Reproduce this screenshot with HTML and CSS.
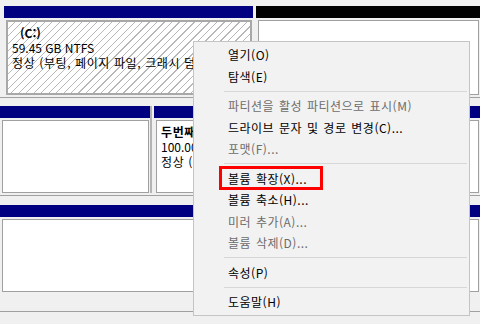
FILE: index.html
```html
<!DOCTYPE html>
<html lang="ko">

<head>
    <meta charset="UTF-8">
    <title>디스크 관리</title>
    <link rel="stylesheet" href="styles.css">
</head>

<body>
    <div class="view">
        <div class="disk first">
            <div class="parts">
                <div class="part sys">
                    <div class="bar"></div>
                    <div class="box hatched">
                        <div class="name">(C:)</div>
                        <div>59.45 GB NTFS</div>
                        <div class="ko">정상 (부팅, 페이지 파일, 크래시 덤프, 주 파티션)</div>
                    </div>
                </div>
                <div class="part free">
                    <div class="bar black"></div>
                    <div class="box"></div>
                </div>
            </div>
        </div>

        <div class="disk">
            <div class="parts split">
                <div class="part small">
                    <div class="bar"></div>
                    <div class="box"></div>
                </div>
                <div class="part free">
                    <div class="bar"></div>
                    <div class="box vol">
                        <div class="name ko">두번째 볼륨 (D:)</div>
                        <div>100.00 GB NTFS</div>
                        <div class="ko">정상 (주 파티션)</div>
                    </div>
                </div>
            </div>
        </div>

        <div class="disk last">
            <div class="parts">
                <div class="part free">
                    <div class="bar"></div>
                    <div class="box"></div>
                </div>
            </div>
        </div>
    </div>

    <div class="menu">
        <div class="item">열기(O)</div>
        <div class="item">탐색(E)</div>
        <div class="sep"></div>
        <div class="item off">파티션을 활성 파티션으로 표시(M)</div>
        <div class="item">드라이브 문자 및 경로 변경(C)...</div>
        <div class="item off">포맷(F)...</div>
        <div class="sep"></div>
        <div class="item">볼륨 확장(X)...<span class="mark"></span></div>
        <div class="item">볼륨 축소(H)...</div>
        <div class="item off">미러 추가(A)...</div>
        <div class="item off">볼륨 삭제(D)...</div>
        <div class="sep"></div>
        <div class="item">속성(P)</div>
        <div class="sep"></div>
        <div class="item">도움말(H)</div>
    </div>
</body>

</html>
```

FILE: styles.css
```css
body {
    margin: 0;
    height: 324px;
    overflow: hidden;
    background: #f0f0f0;
    font-family: "Noto Sans CJK KR", "Noto Sans", sans-serif;
    font-size: 12px;
    color: #000;
}

.disk {
    padding: 8px 0 2px;
    border-bottom: 1px solid #a0a0a0;
}

.disk.first {
    padding-top: 6px;
}

.disk.last {
    padding-top: 9px;
    padding-bottom: 19px;
}

.parts {
    display: flex;
    gap: 3px;
}

.first .parts {
    padding-left: 4px;
}

.split {
    gap: 2px;
    background: #b4b4b4;
}

.split .part {
    background: #f0f0f0;
}

.split .part + .part {
    padding-left: 2px;
}

.part {
    display: flex;
    flex-direction: column;
}

.sys {
    width: 249px;
}

.small {
    width: 150px;
}

.free {
    flex: 1;
}

.bar {
    height: 12px;
    background: #000080;
}

.bar.black {
    background: #000;
}

.box {
    height: 73px;
    margin: 2px 1px 0 2px;
    padding: 3px 3px;
    border: 1px solid #a0a0a0;
    box-sizing: border-box;
    background: #fff;
    line-height: 15px;
    white-space: nowrap;
    overflow: hidden;
}

.first .box {
    height: 75px;
}

.hatched {
    padding: 3px 4px;
    border: 2px solid #a8a8a8;
    background: repeating-linear-gradient(135deg, #fff 0 4.3px, #b8b8b8 4.3px 5.3px);
}

.vol {
    padding-left: 4px;
}

.ko {
    letter-spacing: 0.6px;
}

.name {
    font-weight: bold;
}

.hatched .name {
    padding-left: 8px;
}

.menu {
    position: absolute;
    left: 193px;
    top: 41px;
    width: 277px;
    padding: 2px;
    box-sizing: border-box;
    border: 1px solid #c4c4c4;
    background: #f2f2f2;
}

.item {
    position: relative;
    height: 21.5px;
    line-height: 21.5px;
    padding-left: 32px;
    white-space: nowrap;
    letter-spacing: 0.5px;
    word-spacing: 1px;
}

.item.off {
    color: #6d6d6d;
}

.sep {
    height: 8px;
    display: flex;
    align-items: center;
    padding-left: 28px;
}

.sep::before {
    content: "";
    flex: 1;
    height: 1px;
    background: #d7d7d7;
}

.mark {
    position: absolute;
    left: 23px;
    top: -2px;
    width: 104px;
    height: 24px;
    border: 3px solid #f00;
    box-sizing: border-box;
}
```
